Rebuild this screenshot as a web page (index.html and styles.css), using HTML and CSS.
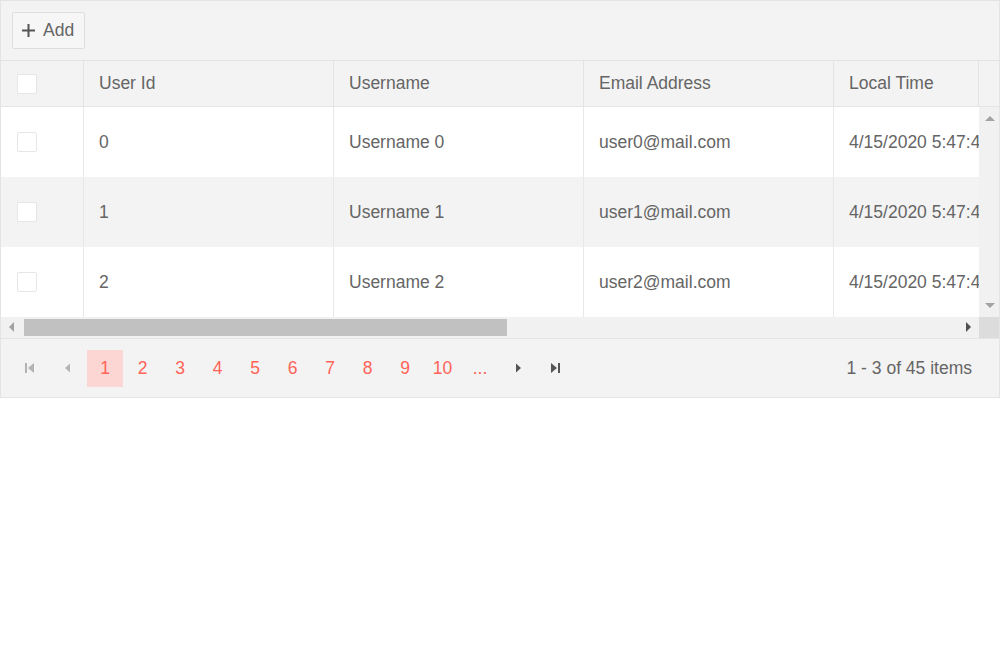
FILE: index.html
```html
<!DOCTYPE html>
<html>
<head>
<meta charset="utf-8">
<link rel="stylesheet" href="styles.css">
</head>
<body>
<div class="grid">
  <div class="toolbar">
    <button class="btn"><svg class="plus" width="13" height="13" viewBox="0 0 13 13"><rect x="5.5" y="0" width="2" height="13" fill="#555"/><rect x="0" y="5.5" width="13" height="2" fill="#555"/></svg><span>Add</span></button>
  </div>
  <div class="header">
    <div class="header-view">
      <div class="cols">
        <div class="th chk-cell"><span class="chk"></span></div>
        <div class="th">User Id</div>
        <div class="th">Username</div>
        <div class="th">Email Address</div>
        <div class="th last">Local Time</div>
      </div>
    </div>
    <div class="header-pad"></div>
  </div>
  <div class="content">
    <div class="body-view">
      <div class="cols row">
        <div class="td chk-cell"><span class="chk"></span></div>
        <div class="td">0</div>
        <div class="td">Username 0</div>
        <div class="td">user0@mail.com</div>
        <div class="td last">4/15/2020 5:47:48 PM</div>
      </div>
      <div class="cols row alt">
        <div class="td chk-cell"><span class="chk"></span></div>
        <div class="td">1</div>
        <div class="td">Username 1</div>
        <div class="td">user1@mail.com</div>
        <div class="td last">4/15/2020 5:47:48 PM</div>
      </div>
      <div class="cols row">
        <div class="td chk-cell"><span class="chk"></span></div>
        <div class="td">2</div>
        <div class="td">Username 2</div>
        <div class="td">user2@mail.com</div>
        <div class="td last">4/15/2020 5:47:48 PM</div>
      </div>
    </div>
    <div class="vscroll">
      <span class="arr up"></span>
      <span class="arr down"></span>
    </div>
  </div>
  <div class="hscroll">
    <div class="htrack">
      <span class="arr left"></span>
      <span class="thumb"></span>
      <span class="arr right"></span>
    </div>
    <div class="corner"></div>
  </div>
  <div class="pager">
    <div class="pages">
      <span class="pi nav"><svg width="12" height="12" viewBox="0 0 12 12"><path d="M1 1h2v10H1zM10 1v10L4 6z" fill="#b3b3b3"/></svg></span>
      <span class="pi nav"><svg width="12" height="12" viewBox="0 0 12 12"><path d="M8 1.5v9L3 6z" fill="#b3b3b3"/></svg></span>
      <span class="pi sel">1</span>
      <span class="pi">2</span>
      <span class="pi">3</span>
      <span class="pi">4</span>
      <span class="pi">5</span>
      <span class="pi">6</span>
      <span class="pi">7</span>
      <span class="pi">8</span>
      <span class="pi">9</span>
      <span class="pi">10</span>
      <span class="pi">...</span>
      <span class="pi nav"><svg width="12" height="12" viewBox="0 0 12 12"><path d="M4 1.5v9L9 6z" fill="#555"/></svg></span>
      <span class="pi nav"><svg width="12" height="12" viewBox="0 0 12 12"><path d="M2 1v10L8 6zM9 1h2v10H9z" fill="#555"/></svg></span>
    </div>
    <div class="info">1 - 3 of 45 items</div>
  </div>
</div>
</body>
</html>
```
FILE: styles.css
```css
* { box-sizing: border-box; }
body {
  margin: 0;
  background: #fff;
  font-family: "Liberation Sans", Arial, sans-serif;
  font-size: 17.5px;
  color: #656565;
}
.grid {
  width: 1000px;
  border: 1px solid #e4e4e4;
  background: #fff;
}
.toolbar {
  height: 60px;
  padding: 11px;
  background: #f3f3f3;
  border-bottom: 1px solid #e4e4e4;
}
.btn {
  display: flex;
  align-items: center;
  gap: 8px;
  height: 37px;
  width: 73px;
  padding: 0 0 0 9px;
  border: 1px solid #dedede;
  border-radius: 2px;
  background: #f6f6f6;
  font-family: inherit;
  font-size: 17.5px;
  color: #656565;
}
.plus { flex: none; }
.header {
  display: flex;
  height: 46px;
  background: #f3f3f3;
  border-bottom: 1px solid #e4e4e4;
}
.header-view {
  width: 978px;
  overflow: hidden;
  border-right: 1px solid #e4e4e4;
}
.header-pad { width: 20px; }
.cols {
  display: grid;
  grid-template-columns: 83px 250px 250px 250px 250px;
  width: 1083px;
}
.th, .td {
  display: flex;
  align-items: center;
  padding-left: 15px;
  border-right: 1px solid #e4e4e4;
  white-space: nowrap;
}
.th { height: 45px; }
.th.last, .td.last { border-right: none; }
.chk-cell { padding-left: 16px; }
.chk {
  width: 20px;
  height: 20px;
  background: #fff;
  border: 1px solid #e6e6e6;
  border-radius: 2px;
}
.content {
  display: flex;
  height: 210px;
}
.body-view {
  width: 978px;
  overflow: hidden;
}
.row { height: 70px; background: #fff; }
.row.alt { background: #f3f3f3; }
.td { height: 70px; border-right-color: #e8e8e8; }
.vscroll {
  width: 20px;
  background: #f1f1f1;
  display: flex;
  flex-direction: column;
  justify-content: space-between;
  align-items: center;
  padding: 9px 0 9px 1px;
}
.arr { width: 0; height: 0; border: 5px solid transparent; }
.up { border-bottom-color: #a3a3a3; border-top-width: 0; }
.down { border-top-color: #a3a3a3; border-bottom-width: 0; }
.hscroll {
  display: flex;
  height: 22px;
  border-bottom: 1px solid #e4e4e4;
}
.htrack {
  width: 978px;
  background: #f1f1f1;
  display: flex;
  align-items: center;
  padding: 0 8px 1px 8px;
}
.left { border-right-color: #a3a3a3; border-left-width: 0; margin-right: 10px; }
.right { border-left-color: #505050; border-right-width: 0; margin-left: auto; }
.thumb {
  width: 483px;
  height: 17px;
  background: #c1c1c1;
}
.corner { width: 20px; background: #dcdcdc; }
.pager {
  display: flex;
  align-items: center;
  justify-content: space-between;
  height: 58px;
  padding: 0 27px 0 11px;
  background: #f3f3f3;
}
.pages { display: flex; gap: 1.5px; }
.pi {
  width: 36px;
  height: 37px;
  display: flex;
  align-items: center;
  justify-content: center;
  color: #ff6358;
}
.pi.sel { background: #fbd6d3; }
.info { color: #656565; }
```
